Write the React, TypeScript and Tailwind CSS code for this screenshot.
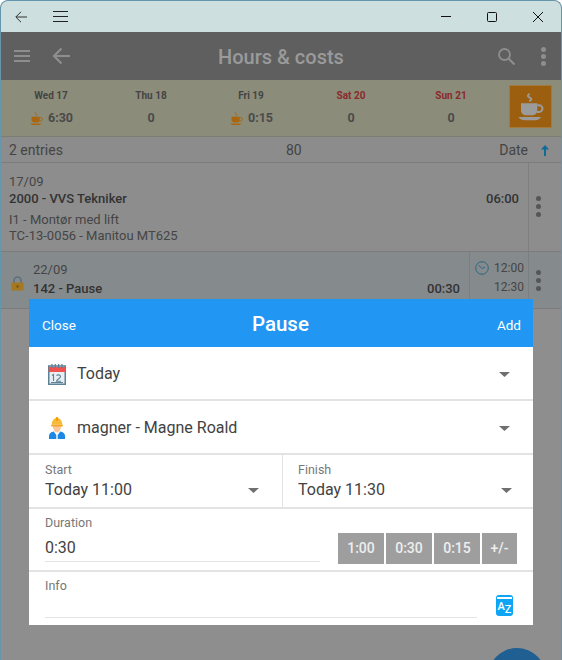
import React from "react";

const Caret = ({ c = "#6f6f6f" }: { c?: string }) => (
  <svg width="11" height="5" viewBox="0 0 11 5"><path d="M0 0h11L5.500 5z" fill={c} /></svg>
);

const Cup = ({ c, size = 20 }: { c: string; size?: number }) => (
  <svg width={size} height={size} viewBox="0 0 24 24" fill="none">
    <path d="M11 1.500c-2 1 -2 2 0 3c2 1 1.500 2 -.5 2.800" stroke={c} strokeWidth="1.500" />
    <path d="M4 9h13v5.500c0 2.500 -2 4 -4 4h-5c-2.200 0 -4 -1.500 -4 -4z" fill={c} />
    <path d="M17 10.500h1.500a2.700 2.700 0 0 1 0 5.400h-2" stroke={c} strokeWidth="1.600" />
    <path d="M2 20h18c-1 1.800 -3 2.500 -5 2.500h-8c-2 0 -4 -.7 -5 -2.500z" fill={c} />
  </svg>
);

const Dots = ({ c, r = 2.500, gap = 8 }: { c: string; r?: number; gap?: number }) => (
  <svg width={r * 2} height={gap * 2 + r * 2} viewBox={`0 0 ${r * 2} ${gap * 2 + r * 2}`}>
    <circle cx={r} cy={r} r={r} fill={c} />
    <circle cx={r} cy={r + gap} r={r} fill={c} />
    <circle cx={r} cy={r + gap * 2} r={r} fill={c} />
  </svg>
);

const Day = ({ label, value, cup, red, w }: { label: string; value: string; cup?: boolean; red?: boolean; w: string }) => (
  <div className={`flex flex-col items-center ${w}`}>
    <div className={`text-[10px] leading-[12px] font-bold mt-[10px] ${red ? "text-[#8a2a2a]" : "text-[#444]"}`}>{label}</div>
    <div className="flex items-center h-[20px] mt-[6px] gap-[4px] text-[12.500px] font-bold text-[#4a4a4a]">
      {cup && <Cup c="#a7660f" size={15} />}
      <span>{value}</span>
    </div>
  </div>
);

export default function App() {
  return (
    <div className="relative w-[562px] h-[660px] overflow-hidden bg-white text-[#3c3c3c]" style={{ fontFamily: "Roboto, sans-serif" }}>
      <div className="relative h-full flex flex-col rounded-t-[8px] border-x border-t border-[#6496ac] overflow-hidden bg-[#8e8e8e]">
        {/* title bar */}
        <div className="h-[31px] shrink-0 flex items-center bg-[#cde0df] pl-[14px] pr-[18px]">
          <svg width="12" height="12" viewBox="0 0 12 12" fill="none" stroke="#333" strokeWidth="1">
            <path d="M12 6H1M6 .8L.8 6L6 11.200" />
          </svg>
          <svg className="ml-[26px]" width="15" height="11" viewBox="0 0 15 11" stroke="#222" strokeWidth="1">
            <path d="M0 .5h15M0 5.500h15M0 10.500h15" />
          </svg>
          <div className="flex-1" />
          <svg width="10" height="2" viewBox="0 0 10 2" className="mr-[36px]"><path d="M0 .5h10" stroke="#111" /></svg>
          <svg width="10" height="10" viewBox="0 0 10 10" fill="none" className="mr-[36px]"><rect x=".5" y=".5" width="9" height="9" rx="1" stroke="#111" /></svg>
          <svg width="10" height="10" viewBox="0 0 10 10" stroke="#111" strokeWidth="1"><path d="M0 0l10 10M10 0L0 10" /></svg>
        </div>
        {/* app bar */}
        <div className="h-[48px] shrink-0 flex items-center bg-[#5f5f5f] pl-[13px] pr-[15px]">
          <svg width="16" height="12" viewBox="0 0 16 12" fill="#8e8e8e"><path d="M0 0h16v2H0zM0 5h16v2H0zM0 10h16v2H0z" /></svg>
          <svg className="ml-[22px]" width="18" height="18" viewBox="0 0 18 18" fill="none" stroke="#8e8e8e" strokeWidth="2.200"><path d="M18 9H2M9.500 1.500L2 9l7.500 7.500" /></svg>
          <div className="flex-1 text-center text-[20px] font-medium text-[#9a9a9a] pr-[6px] pt-[2px]">Hours &amp; costs</div>
          <svg width="17" height="17" viewBox="0 0 17 17" fill="none" stroke="#8e8e8e" strokeWidth="1.800"><circle cx="6.500" cy="6.500" r="5.500" /><path d="M10.500 10.500l6 6" strokeWidth="2.200" /></svg>
          <div className="ml-[26px] flex"><Dots c="#8e8e8e" r={2.500} gap={7} /></div>
        </div>
        {/* day strip */}
        <div className="h-[57px] shrink-0 flex items-start bg-[#8c8c7a] border-b border-[#7d7d73]">
          <Day w="w-[100px]" label="Wed 17" value="6:30" cup />
          <Day w="w-[100px]" label="Thu 18" value="0" />
          <Day w="w-[100px]" label="Fri 19" value="0:15" cup />
          <Day w="w-[100px]" label="Sat 20" value="0" red />
          <Day w="w-[100px]" label="Sun 21" value="0" red />
          <div className="ml-[8px] mt-[5px] w-[43px] h-[43px] flex items-center justify-center bg-[#9c5f10] border border-[#a5793b]">
            <Cup c="#9b9b9b" size={30} />
          </div>
        </div>
        {/* list header */}
        <div className="h-[26px] shrink-0 flex items-center bg-[#8c8c8c] border-b border-[#7c7c7c] pl-[8px] pr-[12px] pt-[1px] text-[14px] text-[#444]">
          <span className="w-[277px]">2 entries</span>
          <span className="flex-1">80</span>
          <span>Date</span>
          <svg className="ml-[13px]" width="8" height="11" viewBox="0 0 8 11"><path d="M4 0l4 4.500H5V11H3V4.500H0z" fill="#0f6c99" /></svg>
        </div>
        {/* entry 1 */}
        <div className="h-[89px] shrink-0 flex bg-[#8d8d8d] border-b border-[#7c7c7c]">
          <div className="flex-1 pl-[8px] pr-[9px] pt-[11px]">
            <div className="text-[13px] leading-[16px] text-[#454545]">17/09</div>
            <div className="flex justify-between text-[13px] leading-[18px] font-medium text-[#333]"><span>2000 - VVS Tekniker</span><span>06:00</span></div>
            <div className="text-[13px] leading-[16px] text-[#454545] mt-[4px]">I1 - Montør med lift</div>
            <div className="text-[13px] leading-[16px] text-[#454545]">TC-13-0056 - Manitou MT625</div>
          </div>
          <div className="w-[33px] border-l border-[#7f7f7f] flex justify-center pt-[33px] pr-[13px]">
            <Dots c="#565656" />
          </div>
        </div>
        {/* entry 2 */}
        <div className="h-[57px] shrink-0 flex bg-[#858a8c] border-b border-[#7c7c7c]">
          <div className="w-[32px] flex items-center pl-[10px] pt-[6px]">
            <svg width="13" height="15" viewBox="0 0 13 15">
              <path d="M3 7V4.500a3.500 3.500 0 0 1 7 0V7" fill="none" stroke="#5d6f7d" strokeWidth="1.600" />
              <rect x="0.500" y="6.500" width="12" height="8" fill="#a5791f" />
              <rect x="5.500" y="9.500" width="2" height="2" fill="#6b4f16" />
            </svg>
          </div>
          <div className="flex-1 pt-[10px] pr-[9px]">
            <div className="text-[13px] leading-[16px] text-[#454545]">22/09</div>
            <div className="flex justify-between text-[13px] leading-[18px] font-medium text-[#333] mt-[2px]"><span>142 - Pause</span><span>00:30</span></div>
          </div>
          <div className="relative w-[59px] border-l border-[#7a7f82] pt-[7px] pr-[4px] text-[12px] leading-[19px] text-[#454545] text-right">
            <svg className="absolute left-[5px] top-[9px]" width="14" height="14" viewBox="0 0 14 14" fill="none" stroke="#2f6782" strokeWidth="1"><circle cx="7" cy="7" r="6.300" /><path d="M3.500 4L7 7.500l3 -1.500" /></svg>
            <div>12:00</div>
            <div>12:30</div>
          </div>
          <div className="w-[33px] border-l border-[#7a7f82] flex justify-center pt-[18px] pr-[13px]">
            <Dots c="#565656" />
          </div>
        </div>
        {/* FAB */}
        <div className="absolute left-[487px] top-[647px] w-[58px] h-[58px] rounded-full bg-[#1f5f91]" />
      </div>

      {/* dialog */}
      <div className="absolute left-[29px] top-[299px] w-[504px] h-[326px] bg-white flex flex-col">
        <div className="h-[48px] shrink-0 flex items-center justify-between bg-[#2196f3] text-white pl-[13px] pr-[12px] pt-[4px] text-[13.500px]">
          <span>Close</span>
          <span className="text-[20.500px] font-medium pr-[12px] mt-[-4px] pt-[2px]">Pause</span>
          <span>Add</span>
        </div>
        <div className="h-[54px] shrink-0 flex items-center border-b-2 border-[#e3e3e3] pl-[19px] pr-[23px] pt-[2px]">
          <svg width="18" height="21" viewBox="0 0 18 21">
            <rect x=".75" y="2" width="16.500" height="18.250" fill="#e8eef1" stroke="#5d8296" strokeWidth="1.500" />
            <rect x=".75" y="3" width="16.500" height="5" fill="#ef5350" />
            <path d="M4 0v4M7.300 0v4M10.600 0v4M14 0v4" stroke="#5d8296" strokeWidth="1.300" />
            <path d="M4 11.500l1.500 -1v6.500M3 18.500h12M8.500 11.500c1 -1 4 -1 4 1c0 2 -4 3 -4 4.700h4.500" fill="none" stroke="#5d8296" strokeWidth="1.100" />
          </svg>
          <span className="ml-[11px] flex-1 text-[16px] text-[#424242]">Today</span>
          <Caret />
        </div>
        <div className="h-[54px] shrink-0 flex items-center border-b-2 border-[#e3e3e3] pl-[20px] pr-[23px] pt-[2px]">
          <svg width="16" height="22" viewBox="0 0 16 22">
            <path d="M0 22v-3c0 -2.500 2 -4 4.700 -4.500l2.600 3.500V22z" fill="#1e88e5" />
            <path d="M16 22v-3c0 -2.500 -2 -4 -4.700 -4.500L8.700 18V22z" fill="#1e88e5" />
            <path d="M4 9h8c0 3 -1.500 6.500 -4 6.500s-4 -3.500 -4 -6.500z" fill="#f9c79a" />
            <path d="M2.800 7.500c0 -4 2.300 -6.500 5.200 -6.500s5.200 2.500 5.200 6.500z" fill="#f7bb3a" />
            <rect x="6.800" y="0" width="2.400" height="4" rx="1" fill="#f59f00" />
            <rect x="2" y="7.500" width="12" height="2" rx="1" fill="#f5a623" />
          </svg>
          <span className="ml-[12px] flex-1 text-[16px] text-[#424242]">magner - Magne Roald</span>
          <Caret />
        </div>
        <div className="h-[54px] shrink-0 flex border-b-2 border-[#e3e3e3]">
          <div className="w-[254px] border-r border-[#e3e3e3] pl-[16px] pr-[23px] pt-[8px]">
            <div className="text-[12.500px] leading-[14px] text-[#777]">Start</div>
            <div className="flex items-center justify-between text-[16px] leading-[22px] text-[#424242] mt-[2px]"><span>Today 11:00</span><Caret /></div>
          </div>
          <div className="flex-1 pl-[15px] pr-[21px] pt-[8px]">
            <div className="text-[12.500px] leading-[14px] text-[#777]">Finish</div>
            <div className="flex items-center justify-between text-[16px] leading-[22px] text-[#424242] mt-[2px]"><span>Today 11:30</span><Caret /></div>
          </div>
        </div>
        <div className="h-[63px] shrink-0 flex border-b-2 border-[#e3e3e3] pl-[16px] pr-[16px]">
          <div className="w-[275px] pt-[7px]">
            <div className="text-[12.500px] leading-[14px] text-[#777]">Duration</div>
            <div className="text-[16px] leading-[22px] text-[#424242] mt-[7px] pb-[2px] border-b border-[#e3e3e3]">0:30</div>
          </div>
          <div className="ml-[18px] mt-[24px] flex gap-[2px] h-[31px] text-[14px] font-medium text-[#eeeeee]">
            <div className="w-[46px] flex items-center justify-center bg-[#9e9e9e]">1:00</div>
            <div className="w-[46px] flex items-center justify-center bg-[#9e9e9e]">0:30</div>
            <div className="w-[46px] flex items-center justify-center bg-[#9e9e9e]">0:15</div>
            <div className="w-[35px] flex items-center justify-center bg-[#9e9e9e]">+/-</div>
          </div>
        </div>
        <div className="flex-1 flex pl-[16px] pr-[19px]">
          <div className="w-[432px] pt-[7px] h-[46px] border-b border-[#e3e3e3]">
            <div className="text-[12.500px] leading-[14px] text-[#777]">Info</div>
          </div>
          <div className="ml-[19px] mt-[23px] w-[17px] h-[21px] rounded-[3px] bg-[#0ea5f5] flex flex-col items-center text-white">
            <div className="w-[15px] h-[2px] bg-white mt-[2px]" />
            <div className="flex items-start text-[11px] leading-[12px] font-medium mt-[2px]">
              <span>A</span>
              <span className="mt-[3px] leading-[11px]">Z</span>
            </div>
          </div>
        </div>
      </div>
    </div>
  );
}
